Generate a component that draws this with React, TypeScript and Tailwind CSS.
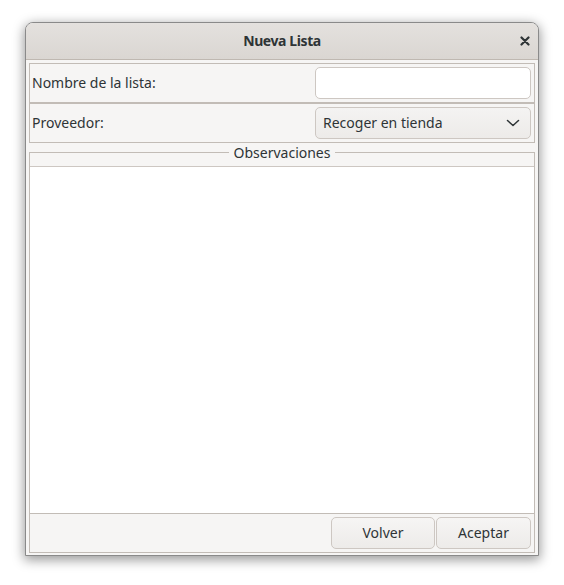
import React from "react";

const font = { fontFamily: '"Noto Sans", "DejaVu Sans", sans-serif' };

function Chevron() {
  return (
    <svg width="14" height="8" viewBox="0 0 14 8" fill="none">
      <path d="M1.5 1.5 L7 6.5 L12.5 1.5" stroke="#2e3436" strokeWidth="1.5" strokeLinecap="round" strokeLinejoin="round" />
    </svg>
  );
}

function CloseIcon() {
  return (
    <svg width="10" height="10" viewBox="0 0 10 10" fill="none">
      <path d="M1.5 1.5 L8.5 8.5 M8.5 1.5 L1.5 8.5" stroke="#2e3436" strokeWidth="2.2" strokeLinecap="round" />
    </svg>
  );
}

export default function App() {
  return (
    <div className="w-[564px] h-[585px] bg-white pt-[22px] pl-[25px]" style={font}>
      <div className="w-[514px] h-[534px] border border-[#8a8a8a] rounded-t-[8px] bg-[#f6f5f4] flex flex-col shadow-[0_3px_12px_1px_rgba(0,0,0,0.4)] text-[#2e3436]">
        {/* header bar */}
        <div className="h-[37px] shrink-0 border-b border-[#bfb8b1] rounded-t-[7px] bg-gradient-to-b from-[#e4e1de] to-[#dad6d2] grid grid-cols-[1fr_auto_1fr] items-center">
          <div />
          <div className="text-[14px] font-bold tracking-[-0.4px] leading-[20px]">Nueva Lista</div>
          <div className="flex justify-end pr-[8px]">
            <CloseIcon />
          </div>
        </div>

        {/* body */}
        <div className="flex-1 flex flex-col px-[3px] pt-[3px] pb-[2px]">
          {/* row 1 */}
          <div className="h-[40px] border border-[#c2bcb6] flex items-center justify-between pl-[2px] pr-[3px]">
            <span className="text-[14px] leading-[20px]">Nombre de la lista:</span>
            <div className="w-[216px] h-[32px] rounded-[5px] border border-[#cdc7c2] bg-white" />
          </div>
          {/* row 2 */}
          <div className="h-[40px] border border-[#c2bcb6] flex items-center justify-between pl-[2px] pr-[3px]">
            <span className="text-[14px] leading-[20px]">Proveedor:</span>
            <div className="w-[216px] h-[32px] rounded-[5px] border border-[#cdc7c2] bg-gradient-to-b from-[#f4f3f2] to-[#edebe9] flex items-center justify-between pl-[7px] pr-[10px]">
              <span className="text-[14px] leading-[20px]">Recoger en tienda</span>
              <Chevron />
            </div>
          </div>

          {/* Observaciones frame */}
          <div className="mt-[9px] h-[401px] border border-[#c2bcb6] relative flex flex-col">
            <div className="absolute -top-[10px] left-0 right-0 flex justify-center">
              <span className="bg-[#f6f5f4] px-[5px] text-[14px] leading-[20px]">Observaciones</span>
            </div>
            <div className="h-[13px] shrink-0" />
            <div className="flex-1 bg-white border-t border-[#cdc7c2]" />
            <div className="h-[39px] shrink-0 border-t border-[#c2bcb6] flex items-center justify-end gap-[1px] pr-[3px]">
              <button className="w-[104px] h-[32px] rounded-[5px] border border-[#cdc7c2] bg-gradient-to-b from-[#f6f5f4] to-[#edebe9] text-[14px] leading-[20px] text-[#2e3436]">
                Volver
              </button>
              <button className="w-[95px] h-[32px] rounded-[5px] border border-[#cdc7c2] bg-gradient-to-b from-[#f6f5f4] to-[#edebe9] text-[14px] leading-[20px] text-[#2e3436]">
                Aceptar
              </button>
            </div>
          </div>
        </div>
      </div>
    </div>
  );
}
